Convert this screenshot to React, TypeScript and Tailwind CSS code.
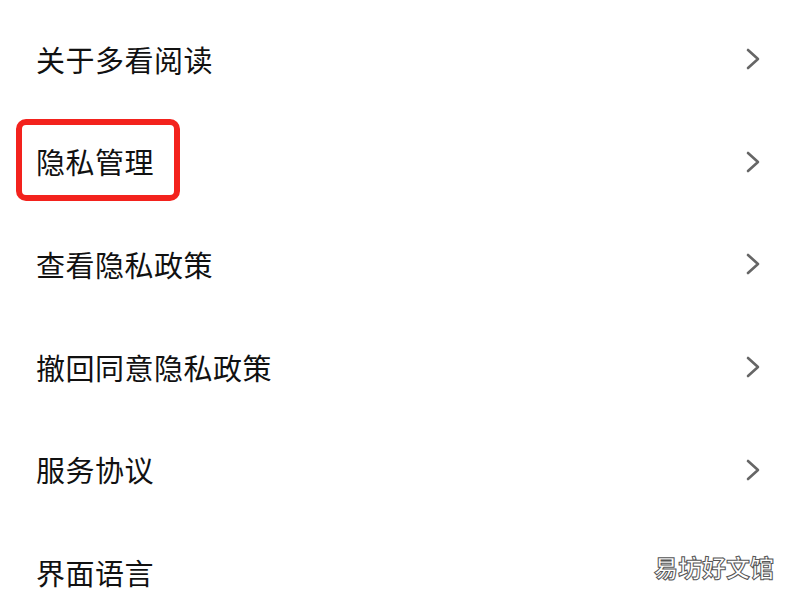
import React from 'react';

const items = [
  { label: '关于多看阅读', arrow: true },
  { label: '隐私管理', arrow: true, marked: true },
  { label: '查看隐私政策', arrow: true },
  { label: '撤回同意隐私政策', arrow: true },
  { label: '服务协议', arrow: true },
  { label: '界面语言', arrow: false },
];

function Chevron() {
  return (
    <svg width="14" height="22" viewBox="0 0 14 22" fill="none">
      <polyline
        points="2,2 12,11 2,20"
        stroke="#666666"
        strokeWidth="2.6"
        strokeLinecap="round"
        strokeLinejoin="round"
      />
    </svg>
  );
}

export default function App() {
  return (
    <div
      className="relative w-[800px] h-[600px] overflow-hidden bg-white pt-[8px]"
      style={{ fontFamily: '"Noto Sans CJK SC", "Noto Sans", sans-serif' }}
    >
      <ul>
        {items.map((item) => (
          <li
            key={item.label}
            className="relative flex items-center justify-between h-[102.6px] pl-[36px] pr-[40px]"
          >
            {/* red annotation box drawn over the row */}
            {item.marked && (
              <div className="absolute left-[16px] top-[8px] w-[164px] h-[82px] border-[6px] border-[#f3221d] rounded-[10px]" />
            )}
            <span className="text-[29px] leading-none text-[#111111] tracking-[0.5px]">
              {item.label}
            </span>
            {item.arrow && <Chevron />}
          </li>
        ))}
      </ul>

      {/* watermark */}
      <div className="absolute left-[654px] top-[555px] text-[24px] leading-none text-white font-bold [-webkit-text-stroke:1px_#555555]">
        易坊好文馆
      </div>
    </div>
  );
}
